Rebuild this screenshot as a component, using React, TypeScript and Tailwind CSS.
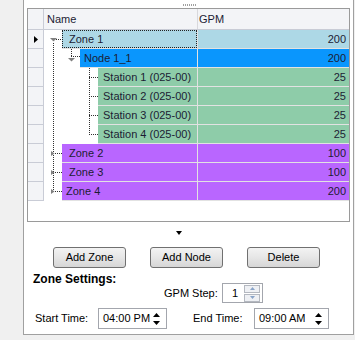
import React from 'react'

type Row = {
  name: string
  gpm: number
  indent: string
  cell: string
  text: string
  focus?: boolean
}

const rows: Row[] = [
  { name: 'Zone 1', gpm: 200, indent: 'w-[18px]', cell: 'bg-[#add8e6]', text: 'pl-[6px]', focus: true },
  { name: 'Node 1_1', gpm: 200, indent: 'w-[36px]', cell: 'bg-[#0a96fd]', text: 'pl-[4px]' },
  { name: 'Station 1 (025-00)', gpm: 25, indent: 'w-[54px]', cell: 'bg-[#8ecca9]', text: 'pl-[5px]' },
  { name: 'Station 2 (025-00)', gpm: 25, indent: 'w-[54px]', cell: 'bg-[#8ecca9]', text: 'pl-[5px]' },
  { name: 'Station 3 (025-00)', gpm: 25, indent: 'w-[54px]', cell: 'bg-[#8ecca9]', text: 'pl-[5px]' },
  { name: 'Station 4 (025-00)', gpm: 25, indent: 'w-[54px]', cell: 'bg-[#8ecca9]', text: 'pl-[5px]' },
  { name: 'Zone 2', gpm: 100, indent: 'w-[18px]', cell: 'bg-[#b966ff]', text: 'pl-[7px]' },
  { name: 'Zone 3', gpm: 100, indent: 'w-[18px]', cell: 'bg-[#b966ff]', text: 'pl-[7px]' },
  { name: 'Zone 4', gpm: 200, indent: 'w-[18px]', cell: 'bg-[#b966ff]', text: 'pl-[4px]' },
]

// dotted connectors of the tree, drawn over the body of the grid
function TreeLines() {
  const dot = { stroke: '#303030', strokeWidth: 1, strokeDasharray: '1 1', shapeRendering: 'crispEdges' as const }
  return (
    <svg
      className="pointer-events-none absolute left-0 top-0 h-[171px] w-[321px] max-w-none"
      width="321"
      height="171"
      viewBox="0 0 321 171"
    >
      {/* zone level */}
      <line x1="25.5" y1="13" x2="25.5" y2="162" {...dot} />
      <line x1="28" y1="9.5" x2="34" y2="9.5" {...dot} />
      <polygon points="22,8 29,8 25.5,11.5" fill="#808080" />
      {[123, 142, 161].map((y) => (
        <g key={y}>
          <line x1="27" y1={y + 0.5} x2="34" y2={y + 0.5} {...dot} />
          <polygon points={`23,${y - 2} 26.5,${y + 0.5} 23,${y + 3}`} fill="#808080" />
        </g>
      ))}
      {/* node level */}
      <line x1="43.5" y1="19" x2="43.5" y2="26" {...dot} />
      <line x1="43" y1="26.5" x2="52" y2="26.5" {...dot} />
      <polygon points="40,28 47,28 43.5,31.5" fill="#808080" />
      {/* station level */}
      <line x1="61.5" y1="38" x2="61.5" y2="104" {...dot} />
      {[47, 66, 85, 104].map((y) => (
        <line key={y} x1="61" y1={y + 0.5} x2="70" y2={y + 0.5} {...dot} />
      ))}
    </svg>
  )
}

function Button({ label }: { label: string }) {
  return (
    <button className="h-[21px] w-[73px] rounded-[3px] border border-[#707070] bg-gradient-to-b from-[#f3f3f3] via-[#e6e6e6] to-[#d6d6d6] text-[11px] text-black">
      {label}
    </button>
  )
}

function TimeBox({ value, width }: { value: string; width: string }) {
  return (
    <div className={`flex h-[21px] items-center justify-between border border-[#a3a6ad] bg-white pl-[4px] pr-[6px] ${width}`}>
      <span>{value}</span>
      <svg width="7" height="14" viewBox="0 0 7 14">
        <polygon points="0,5 7,5 3.5,1" fill="#000" />
        <polygon points="0,9 7,9 3.5,13" fill="#000" />
      </svg>
    </div>
  )
}

export default function App() {
  return (
    <div className="h-[340px] w-[355px] bg-[#f0f0f0] font-['Liberation_Sans',Arial,sans-serif] text-[11px] text-[#111]">
      <div className="ml-[23px] h-[335px] w-[331px] border-x border-b border-[#a0a0a0] bg-white px-[3px]">
        <div className="flex h-[8px] items-start pl-[156px] pt-[4px]">
          <svg width="14" height="3">
            {[0, 2, 4, 6, 8, 10, 12].map((x) => (
              <rect key={x} x={x} y="0" width="1" height="2" fill="#a0a0a0" />
            ))}
          </svg>
        </div>

        {/* grid */}
        <div className="h-[214px] border border-[#9a9a9a] bg-white">
          <div className="flex h-[21px] border-b border-[#c9ccd6] bg-[#f3f4f7] text-[#1c1c34]">
            <div className="w-[16px] border-r border-[#c9ccd6]" />
            <div className="flex w-[154px] items-center border-r border-[#d8d8dc] pl-[3px]">Name</div>
            <div className="flex flex-1 items-center pl-[1px]">GPM</div>
          </div>
          <div className="relative">
            {rows.map((r, i) => (
              <div key={r.name} className="flex h-[19px] text-[#1c1c34]">
                <div className="flex w-[16px] items-center justify-center border-b border-r border-[#c9ccd6] bg-[#f3f4f7]">
                  {i === 0 && (
                    <svg width="4" height="7">
                      <polygon points="0,0 4,3.5 0,7" fill="#000" />
                    </svg>
                  )}
                </div>
                <div className="flex w-[154px]">
                  <div className={r.indent} />
                  <div className={`flex flex-1 border-b border-r border-[#e2e2e2] ${r.cell}`}>
                    <div className={`flex flex-1 items-center ${r.text} ${r.focus ? 'border border-dotted border-[#222]' : ''}`}>
                      {r.name}
                    </div>
                  </div>
                </div>
                <div className={`flex flex-1 items-center justify-end border-b border-[#e2e2e2] pr-[3px] ${r.cell}`}>
                  {r.gpm}
                </div>
              </div>
            ))}
            <TreeLines />
          </div>
        </div>

        <div className="h-[25px] pl-[149px] pt-[9px]">
          <svg width="6" height="4">
            <polygon points="0,0 6,0 3,4" fill="#000" />
          </svg>
        </div>

        <div className="flex gap-[24px] pl-[26px]">
          <Button label="Add Zone" />
          <Button label="Add Node" />
          <Button label="Delete" />
        </div>

        <div className="mt-[5px] flex items-start pl-[6px]">
          <div className="w-[131px] text-[12px] font-bold leading-[13px] text-black">Zone Settings:</div>
          <div className="mt-[10px] flex items-center text-black">
            <span className="w-[58px]">GPM Step:</span>
            <div className="flex h-[20px] w-[41px] items-center border border-[#a3a6ad] bg-white pl-[9px] pr-[2px]">
              <span className="flex-1">1</span>
              <div className="flex flex-col">
                <div className="flex h-[8px] w-[16px] items-center justify-center border border-[#b4b8c0] bg-[#eef0f4]">
                  <svg width="5" height="3">
                    <polygon points="0,3 5,3 2.5,0" fill="#8aa4c8" />
                  </svg>
                </div>
                <div className="mt-[1px] flex h-[8px] w-[16px] items-center justify-center border border-[#b4b8c0] bg-[#eef0f4]">
                  <svg width="5" height="3">
                    <polygon points="0,0 5,0 2.5,3" fill="#8aa4c8" />
                  </svg>
                </div>
              </div>
            </div>
          </div>
        </div>

        <div className="mt-[5px] flex items-center pl-[8px] text-black">
          <span className="w-[63px]">Start Time:</span>
          <TimeBox value="04:00 PM" width="w-[69px]" />
          <span className="ml-[26px] w-[61px]">End Time:</span>
          <TimeBox value="09:00 AM" width="w-[75px]" />
        </div>
      </div>
    </div>
  )
}
